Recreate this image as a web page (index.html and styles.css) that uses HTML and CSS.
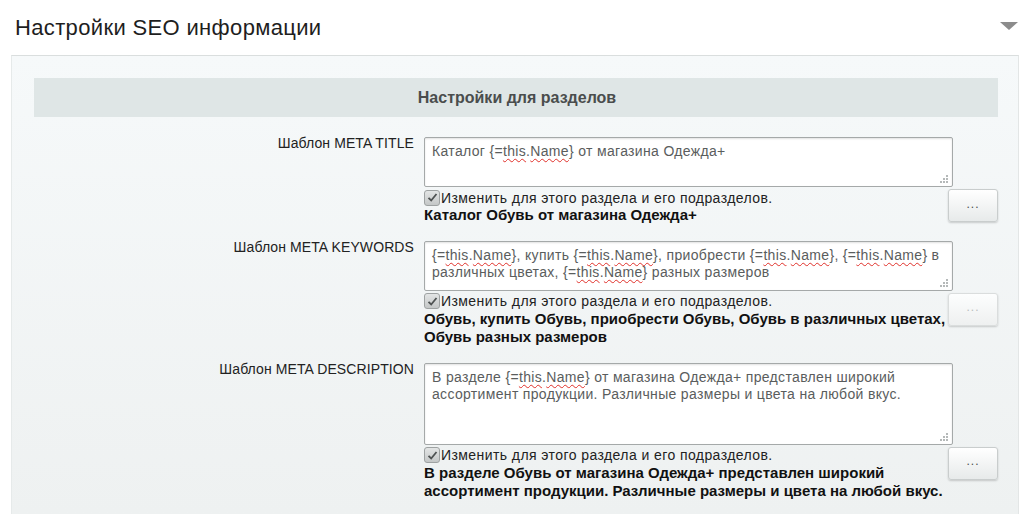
FILE: index.html
```html
<!DOCTYPE html>
<html lang="ru">
<head>
<meta charset="utf-8">
<title>Настройки SEO информации</title>
<link rel="stylesheet" href="styles.css">
</head>
<body>
<div class="header">
  <h1 class="title">Настройки SEO информации</h1>
  <span class="toggle"></span>
</div>
<div class="panel">
  <div class="section-head">Настройки для разделов</div>

  <div class="row">
    <div class="label">Шаблон META TITLE</div>
    <div class="field">
      <div class="area h50">
        <div class="area-text">Каталог {=<span class="sp">this</span>.<span class="sp">Name</span>} от магазина Одежда+</div>
        <svg class="grip" width="10" height="10" viewBox="0 0 10 10"><g fill="#b5b9b9"><rect x="7" y="1" width="2" height="2"/><rect x="4" y="4" width="2" height="2"/><rect x="7" y="4" width="2" height="2"/><rect x="1" y="7" width="2" height="2"/><rect x="4" y="7" width="2" height="2"/><rect x="7" y="7" width="2" height="2"/></g></svg>
      </div>
      <div class="under">
        <div class="under-text">
          <label class="check"><span class="box"><svg width="13" height="13" viewBox="0 0 13 13"><path d="M2.5 6.8 L5.2 9.5 L10.5 3" fill="none" stroke="#4e5252" stroke-width="1.8"/></svg></span>Изменить для этого раздела и его подразделов.</label>
          <div class="result">Каталог Обувь от магазина Одежда+</div>
        </div>
        <button class="btn" type="button">...</button>
      </div>
    </div>
  </div>

  <div class="row">
    <div class="label">Шаблон META KEYWORDS</div>
    <div class="field">
      <div class="area h50">
        <div class="area-text">{=<span class="sp">this</span>.<span class="sp">Name</span>}, купить {=<span class="sp">this</span>.<span class="sp">Name</span>}, приобрести {=<span class="sp">this</span>.<span class="sp">Name</span>}, {=<span class="sp">this</span>.<span class="sp">Name</span>} в различных цветах, {=<span class="sp">this</span>.<span class="sp">Name</span>} разных размеров</div>
        <svg class="grip" width="10" height="10" viewBox="0 0 10 10"><g fill="#b5b9b9"><rect x="7" y="1" width="2" height="2"/><rect x="4" y="4" width="2" height="2"/><rect x="7" y="4" width="2" height="2"/><rect x="1" y="7" width="2" height="2"/><rect x="4" y="7" width="2" height="2"/><rect x="7" y="7" width="2" height="2"/></g></svg>
      </div>
      <div class="under">
        <div class="under-text">
          <label class="check"><span class="box"><svg width="13" height="13" viewBox="0 0 13 13"><path d="M2.5 6.8 L5.2 9.5 L10.5 3" fill="none" stroke="#4e5252" stroke-width="1.8"/></svg></span>Изменить для этого раздела и его подразделов.</label>
          <div class="result">Обувь, купить Обувь, приобрести Обувь, Обувь в различных цветах, Обувь разных размеров</div>
        </div>
        <button class="btn btn-disabled" type="button">...</button>
      </div>
    </div>
  </div>

  <div class="row">
    <div class="label">Шаблон META DESCRIPTION</div>
    <div class="field">
      <div class="area h82">
        <div class="area-text">В разделе {=<span class="sp">this</span>.<span class="sp">Name</span>} от магазина Одежда+ представлен широкий ассортимент продукции. Различные размеры и цвета на любой вкус.</div>
        <svg class="grip" width="10" height="10" viewBox="0 0 10 10"><g fill="#b5b9b9"><rect x="7" y="1" width="2" height="2"/><rect x="4" y="4" width="2" height="2"/><rect x="7" y="4" width="2" height="2"/><rect x="1" y="7" width="2" height="2"/><rect x="4" y="7" width="2" height="2"/><rect x="7" y="7" width="2" height="2"/></g></svg>
      </div>
      <div class="under">
        <div class="under-text">
          <label class="check"><span class="box"><svg width="13" height="13" viewBox="0 0 13 13"><path d="M2.5 6.8 L5.2 9.5 L10.5 3" fill="none" stroke="#4e5252" stroke-width="1.8"/></svg></span>Изменить для этого раздела и его подразделов.</label>
          <div class="result">В разделе Обувь от магазина Одежда+ представлен широкий ассортимент продукции. Различные размеры и цвета на любой вкус.</div>
        </div>
        <button class="btn" type="button">...</button>
      </div>
    </div>
  </div>
</div>
</body>
</html>
```

FILE: styles.css
```css
* { box-sizing: border-box; }

html, body {
  margin: 0;
  padding: 0;
  background: #ffffff;
  font-family: "Liberation Sans", Arial, sans-serif;
  color: #222;
}

body { height: 514px; overflow: hidden; }

.header {
  display: flex;
  justify-content: space-between;
  align-items: flex-start;
  height: 55px;
  padding: 15px 6px 0 15px;
}

.title {
  margin: 0;
  font-size: 22px;
  line-height: 26px;
  letter-spacing: 0.35px;
  font-weight: normal;
  color: #1e1e1e;
}

.toggle {
  margin-top: 7px;
  width: 0;
  height: 0;
  border-left: 9px solid transparent;
  border-right: 9px solid transparent;
  border-top: 8px solid #8c8c8c;
}

.panel {
  margin: 0 5px 0 11px;
  height: 459px;
  border-top: 1px solid #dadede;
  border-left: 1px solid #e6eaea;
  border-right: 1px solid #e3e6e6;
  background: linear-gradient(#f6f9fa, #eef1f1);
  padding: 22px 20px 0 22px;
}

.section-head {
  height: 39px;
  background: #dfe6e6;
  text-align: center;
  font-size: 16px;
  font-weight: bold;
  line-height: 39px;
  color: #4a4d4d;
  margin-bottom: 18px;
  padding-left: 2px;
}

.row {
  display: grid;
  grid-template-columns: 380px 574px;
  column-gap: 10px;
  margin-bottom: 14px;
}

.label {
  text-align: right;
  font-size: 14px;
  line-height: 17px;
  letter-spacing: 0.1px;
  color: #222;
}

.field { padding-top: 2px; }

.area {
  position: relative;
  width: 529px;
  background: #ffffff;
  border: 1px solid #a5a9a9;
  border-radius: 2px;
  box-shadow: inset 0 1px 2px rgba(0,0,0,0.12);
  padding: 5px 6px 0 7px;
}
.h50 { height: 50px; }
.h82 { height: 82px; }

.area-text {
  font-size: 14px;
  line-height: 17px;
  letter-spacing: 0.33px;
  color: #5a5d5d;
}

.sp {
  text-decoration: underline wavy #e0302a;
  text-decoration-thickness: 1px;
  text-underline-offset: 2px;
}

.grip {
  position: absolute;
  right: 3px;
  bottom: 2px;
}

.under {
  display: flex;
  align-items: flex-start;
}

.under-text {
  width: 524px;
}

.check {
  display: flex;
  align-items: center;
  height: 19px;
  font-size: 14px;
  letter-spacing: 0.42px;
  color: #222;
  padding-top: 2px;
}

.box {
  width: 16px;
  height: 16px;
  flex: none;
  margin-right: 1px;
  border: 1px solid #9ea2a2;
  border-radius: 3px;
  background: linear-gradient(#e3e5e5, #c4c7c7);
  display: flex;
  align-items: center;
  justify-content: center;
}

.result {
  font-size: 15px;
  line-height: 18.5px;
  font-weight: bold;
  color: #111;
}

.btn {
  flex: none;
  width: 50px;
  height: 33px;
  margin-top: 2px;
  border: 1px solid #c9cdcd;
  border-radius: 3px;
  background: linear-gradient(#ffffff, #e7eaea);
  box-shadow: 0 1px 2px rgba(0,0,0,0.18);
  font-family: "Liberation Sans", Arial, sans-serif;
  font-size: 12px;
  color: #4a4d4d;
  letter-spacing: 1px;
  padding: 0 0 4px 0;
}

.btn-disabled {
  color: #b9bdbd;
  background: linear-gradient(#fdfefe, #eef0f0);
  border-color: #dadddd;
}
```
